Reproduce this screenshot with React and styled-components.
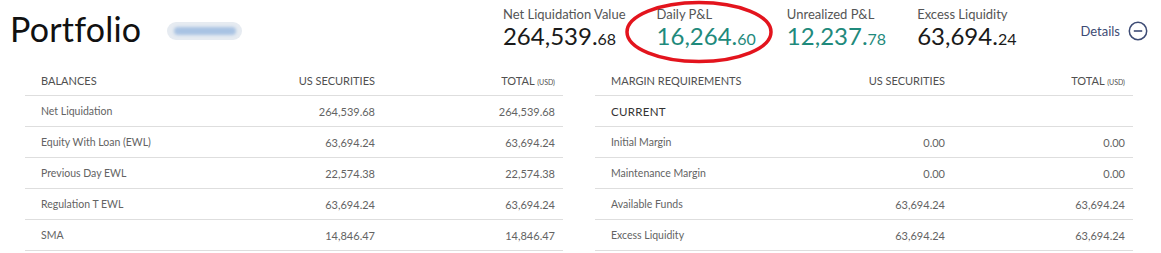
import styled, { createGlobalStyle } from "styled-components";

const GlobalStyle = createGlobalStyle`
  body {
    margin: 0;
    background: #fff;
    font-family: Lato, "Liberation Sans", sans-serif;
  }
`;

const Page = styled.div`
  width: 1161px;
  height: 253px;
  overflow: hidden;
  position: relative;
`;

const Header = styled.div`
  height: 65px;
  display: flex;
  align-items: center;
  padding: 0 13px 0 10px;
`;

const Title = styled.h1`
  margin: 0 0 9px 0;
  font-size: 34px;
  font-weight: 400;
  color: #111;
  letter-spacing: 0.2px;
`;

const AccountPill = styled.div`
  margin: 0 0 4px 26px;
  width: 75px;
  height: 18px;
  border-radius: 9px;
  background: #e6ebf1;
  display: flex;
  align-items: center;
  justify-content: center;
`;

const Smudge = styled.div`
  width: 62px;
  height: 8px;
  border-radius: 4px;
  background: #a9c3e3;
  filter: blur(1.5px);
`;

const Metrics = styled.div`
  margin-left: auto;
  display: flex;
  gap: 31px;
`;

const Metric = styled.div`
  display: flex;
  flex-direction: column;
`;

const MetricLabel = styled.span`
  font-size: 13px;
  color: #555;
  line-height: 16px;
  margin-top: -6px;
`;

const MetricValue = styled.span`
  font-size: 24px;
  line-height: 28px;
  color: ${(props) => (props.positive ? "#1f8a7c" : "#1a1a1a")};
  white-space: nowrap;
`;

const Cents = styled.span`
  font-size: 16px;
`;

const Details = styled.button`
  margin-left: 64px;
  margin-bottom: 4px;
  display: flex;
  align-items: center;
  gap: 8px;
  border: none;
  background: none;
  padding: 0;
  font-family: inherit;
  font-size: 13px;
  color: #3d4b74;
  cursor: pointer;
`;

const Annotation = styled.svg`
  position: absolute;
  left: 622px;
  top: 0;
  pointer-events: none;
`;

const Tables = styled.div`
  display: flex;
  gap: 32px;
  padding-left: 25px;
`;

const Table = styled.div`
  width: 538px;
`;

const Row = styled.div`
  display: grid;
  grid-template-columns: 1fr 120px 180px;
  align-items: center;
  height: 30px;
  padding: 0 8px 0 16px;
  border-bottom: 1px solid #dedede;
  font-size: ${(props) => (props.head ? "11px" : "10.5px")};
  color: ${(props) => (props.head ? "#505050" : "#636363")};
  text-transform: ${(props) => (props.head ? "uppercase" : "none")};
`;

const Cell = styled.span`
  text-align: ${(props) => (props.right ? "right" : "left")};
  font-size: ${(props) => (props.num ? "11px" : "inherit")};
  white-space: nowrap;
`;

const Section = styled.span`
  color: #333;
  font-size: 11.5px;
  letter-spacing: 0.3px;
`;

const Unit = styled.span`
  font-size: 7px;
`;

const metrics = [
  { label: "Net Liquidation Value", whole: "264,539", cents: "68" },
  { label: "Daily P&L", whole: "16,264", cents: "60", positive: true },
  { label: "Unrealized P&L", whole: "12,237", cents: "78", positive: true },
  { label: "Excess Liquidity", whole: "63,694", cents: "24" },
];

const balances = [
  ["Net Liquidation", "264,539.68", "264,539.68"],
  ["Equity With Loan (EWL)", "63,694.24", "63,694.24"],
  ["Previous Day EWL", "22,574.38", "22,574.38"],
  ["Regulation T EWL", "63,694.24", "63,694.24"],
  ["SMA", "14,846.47", "14,846.47"],
];

const margins = [
  ["Initial Margin", "0.00", "0.00"],
  ["Maintenance Margin", "0.00", "0.00"],
  ["Available Funds", "63,694.24", "63,694.24"],
  ["Excess Liquidity", "63,694.24", "63,694.24"],
];

function HeadRow({ title }) {
  return (
    <Row head>
      <Cell>{title}</Cell>
      <Cell right>US Securities</Cell>
      <Cell right>
        Total <Unit>(USD)</Unit>
      </Cell>
    </Row>
  );
}

function DataRow({ row }) {
  return (
    <Row>
      <Cell>{row[0]}</Cell>
      <Cell right num>{row[1]}</Cell>
      <Cell right num>{row[2]}</Cell>
    </Row>
  );
}

export default function App() {
  return (
    <Page>
      <GlobalStyle />
      <Header>
        <Title>Portfolio</Title>
        <AccountPill>
          <Smudge />
        </AccountPill>
        <Metrics>
          {metrics.map((m) => (
            <Metric key={m.label}>
              <MetricLabel>{m.label}</MetricLabel>
              <MetricValue positive={m.positive}>
                {m.whole}.<Cents>{m.cents}</Cents>
              </MetricValue>
            </Metric>
          ))}
        </Metrics>
        <Details>
          Details
          <svg width="20" height="20" viewBox="0 0 20 20">
            <circle cx="10" cy="10" r="8.7" fill="none" stroke="#3d4b74" strokeWidth="1.5" />
            <line x1="5.8" y1="10" x2="14.2" y2="10" stroke="#3d4b74" strokeWidth="1.6" />
          </svg>
        </Details>
      </Header>

      <Annotation width="160" height="66" viewBox="0 0 160 66">
        <ellipse cx="77" cy="32" rx="72" ry="29.5" fill="none" stroke="#e3141d" strokeWidth="3.5" />
      </Annotation>

      <Tables>
        <Table>
          <HeadRow title="Balances" />
          {balances.map((r) => (
            <DataRow key={r[0]} row={r} />
          ))}
        </Table>
        <Table>
          <HeadRow title="Margin Requirements" />
          <Row>
            <Section>CURRENT</Section>
          </Row>
          {margins.map((r) => (
            <DataRow key={r[0]} row={r} />
          ))}
        </Table>
      </Tables>
    </Page>
  );
}
